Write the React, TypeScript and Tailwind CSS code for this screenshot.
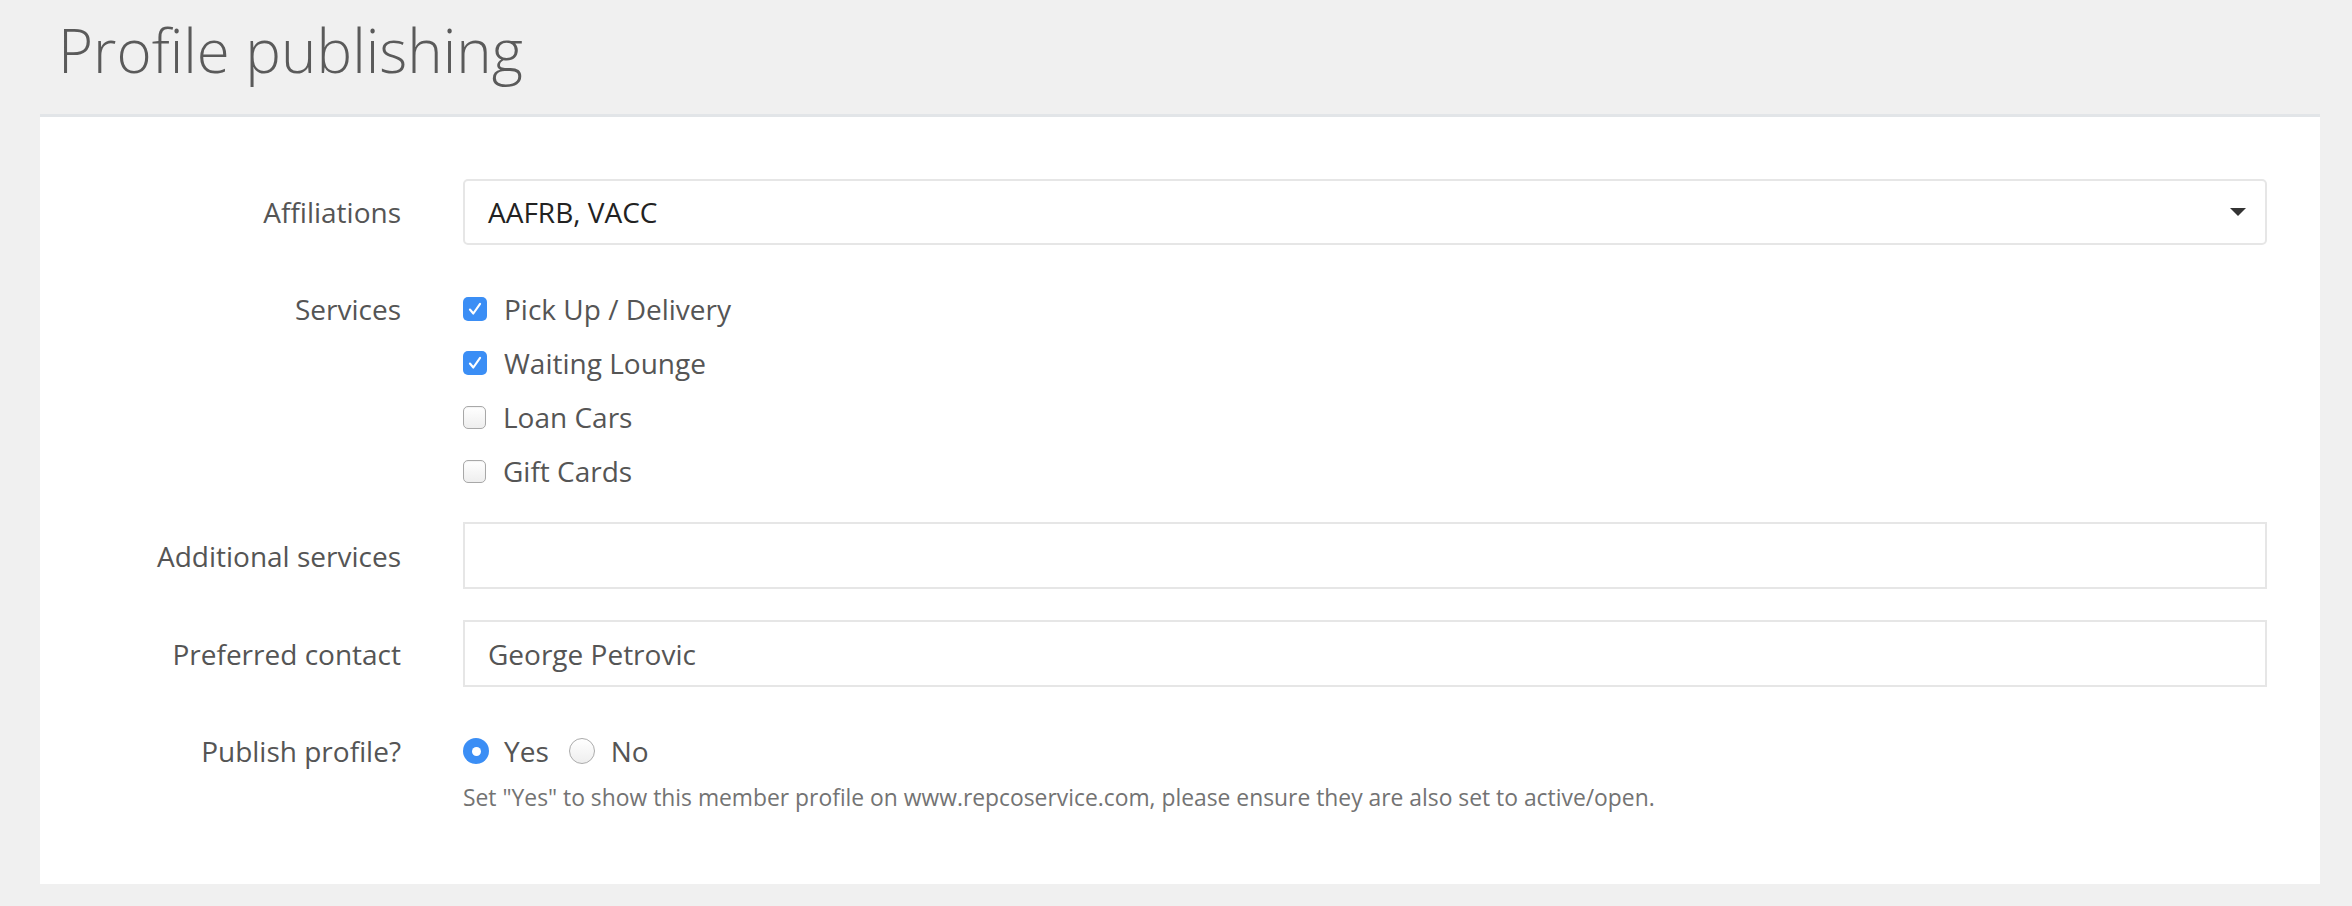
import React from "react";

const services = [
  { name: "Pick Up / Delivery", checked: true },
  { name: "Waiting Lounge", checked: true },
  { name: "Loan Cars", checked: false },
  { name: "Gift Cards", checked: false },
];

const Checkbox = ({ checked }: { checked: boolean }) =>
  checked ? (
    <span className="flex h-[24px] w-[24px] items-center justify-center rounded-[5px] bg-[#3b8ef5]">
      <svg width="18" height="18" viewBox="0 0 16 16" fill="none">
        <path
          d="M3.5 8.5 L6.5 12 L12.5 3.5"
          stroke="white"
          strokeWidth="1.9"
          strokeLinecap="round"
          strokeLinejoin="round"
        />
      </svg>
    </span>
  ) : (
    <span className="block h-[23px] w-[23px] rounded-[5px] border border-[#a8a8a8] bg-gradient-to-b from-white to-[#eeeeee] shadow-[inset_0_1px_1px_rgba(0,0,0,0.05)]" />
  );

const Radio = ({ checked }: { checked: boolean }) =>
  checked ? (
    <span className="flex h-[26px] w-[26px] items-center justify-center rounded-full bg-[#3b8ef5]">
      <span className="h-[9px] w-[9px] rounded-full bg-white" />
    </span>
  ) : (
    <span className="block h-[26px] w-[26px] rounded-full border border-[#ababab] bg-gradient-to-b from-white to-[#eeeeee]" />
  );

const Label = ({ children }: { children: React.ReactNode }) => (
  <div className="w-[361px] shrink-0 text-right text-[28px] leading-[42px] text-[#555]">
    {children}
  </div>
);

export default function App() {
  return (
    <div
      className="min-h-[906px] w-full bg-[#f0f0f0]"
      style={{ fontFamily: '"Open Sans", "Liberation Sans", sans-serif' }}
    >
      <div className="h-[114px] pl-[58px] pt-[14px]">
        <h1 className="text-[60px] font-light leading-[72px] text-[#5a5a5a]">
          Profile publishing
        </h1>
      </div>

      <div className="ml-[40px] mr-[32px] h-[770px] border-t-[3px] border-[#e2e5e8] bg-white pr-[53px] pt-[62px]">
        {/* Affiliations */}
        <div className="flex items-center gap-[62px]">
          <Label>Affiliations</Label>
          <div className="flex h-[66px] flex-1 items-center justify-between rounded-[5px] border-2 border-[#e6e6e6] pl-[23px] pr-[19px]">
            <span className="text-[28px] text-[#222]">AAFRB, VACC</span>
            <svg width="16" height="8" viewBox="0 0 16 8">
              <path d="M0 0 H16 L8 8 Z" fill="#333" />
            </svg>
          </div>
        </div>

        {/* Services */}
        <div className="mt-[37px] flex items-start gap-[62px]">
          <div className="flex h-[54px] items-center">
            <Label>Services</Label>
          </div>
          <div className="flex flex-1 flex-col">
            {services.map((s) => (
              <div key={s.name} className="flex h-[54px] items-center gap-[17px]">
                <Checkbox checked={s.checked} />
                <span className="text-[28px] text-[#555]">{s.name}</span>
              </div>
            ))}
          </div>
        </div>

        {/* Additional services */}
        <div className="mt-[24px] flex items-center gap-[62px]">
          <Label>Additional services</Label>
          <input
            type="text"
            readOnly
            value=""
            className="h-[67px] flex-1 border-2 border-[#e6e6e6] pl-[23px] text-[28px] text-[#555] outline-none"
          />
        </div>

        {/* Preferred contact */}
        <div className="mt-[31px] flex items-center gap-[62px]">
          <Label>Preferred contact</Label>
          <input
            type="text"
            readOnly
            value="George Petrovic"
            className="h-[67px] flex-1 border-2 border-[#e6e6e6] pl-[23px] text-[28px] text-[#555] outline-none"
          />
        </div>

        {/* Publish profile */}
        <div className="mt-[43px] flex items-start gap-[62px]">
          <Label>Publish profile?</Label>
          <div className="flex flex-1 flex-col">
            <div className="flex h-[42px] items-center">
              <Radio checked />
              <span className="ml-[15px] text-[28px] text-[#555]">Yes</span>
              <span className="ml-[20px]">
                <Radio checked={false} />
              </span>
              <span className="ml-[16px] text-[28px] text-[#555]">No</span>
            </div>
            <p className="mt-[9px] text-[22.85px] leading-[34px] text-[#737373]">
              Set "Yes" to show this member profile on www.repcoservice.com, please ensure they are also set to active/open.
            </p>
          </div>
        </div>
      </div>
    </div>
  );
}
